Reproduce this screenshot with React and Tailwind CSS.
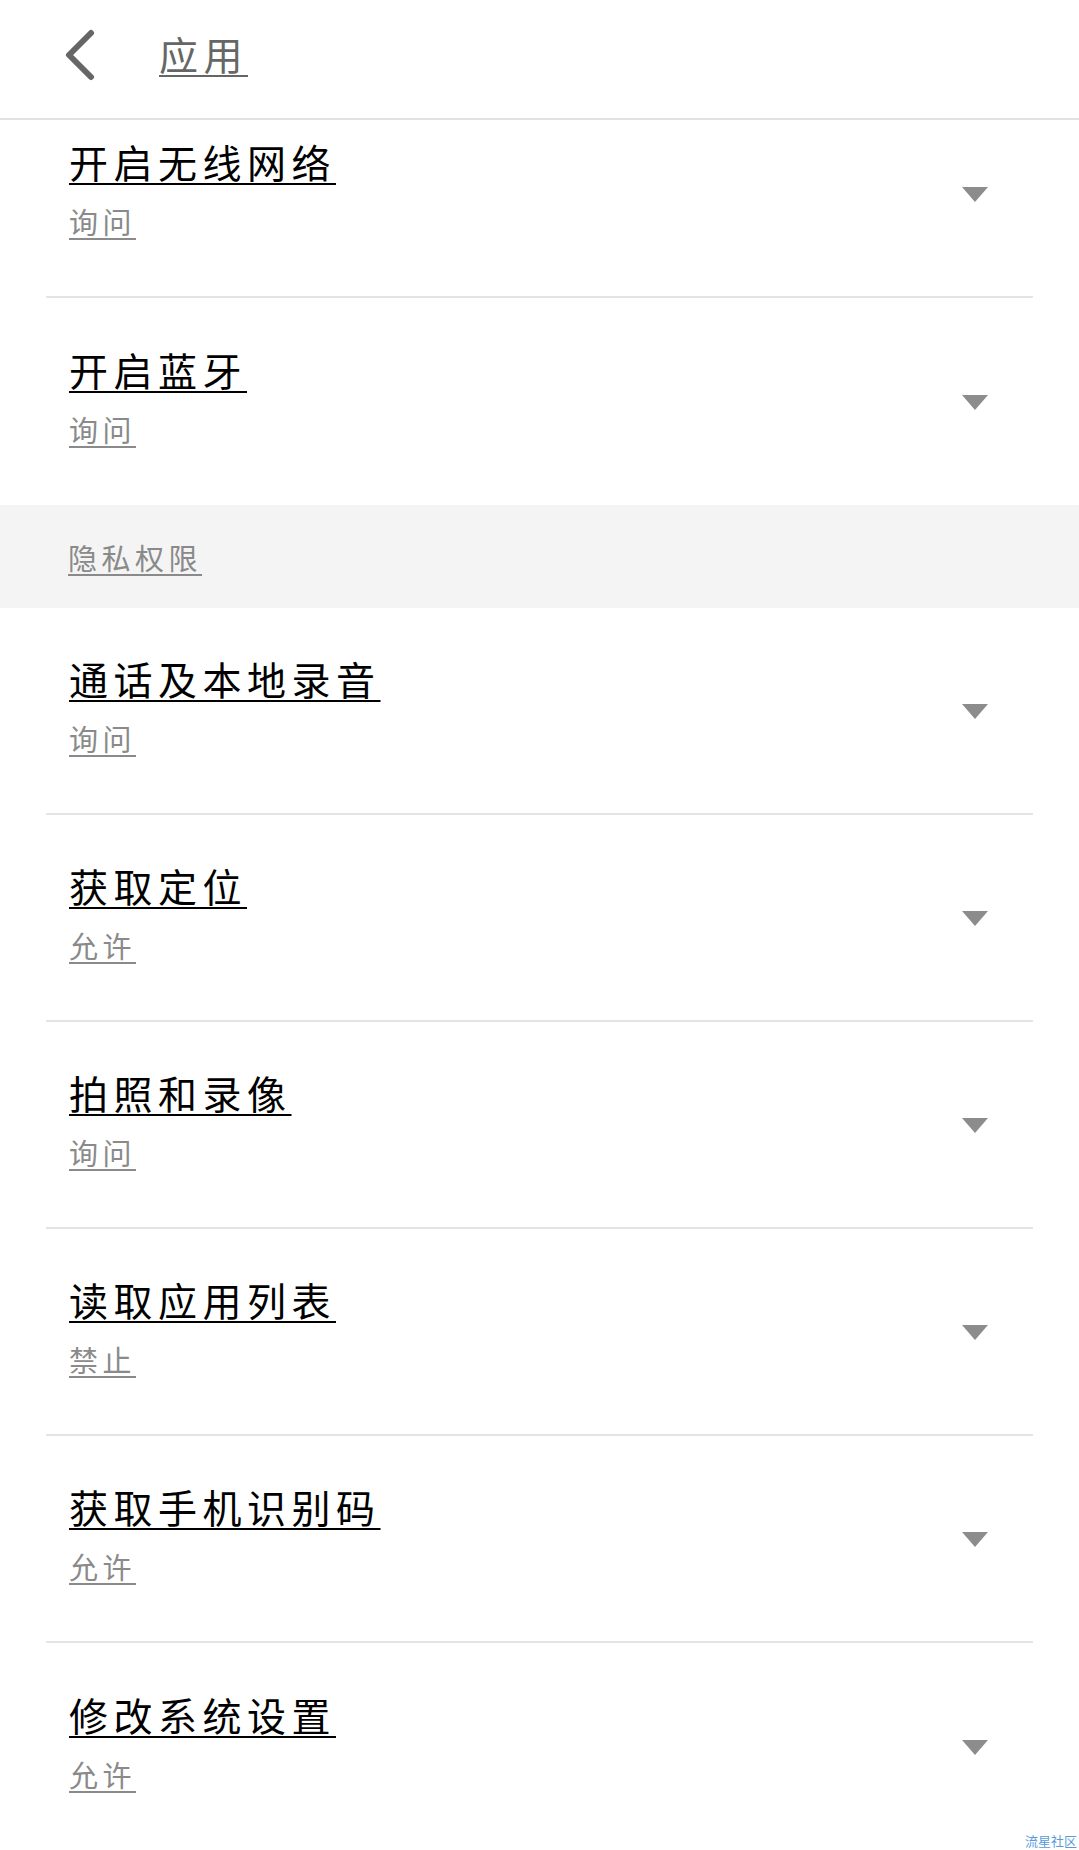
import React from 'react'

const cjk = { fontFamily: '"Noto Sans CJK SC", "Noto Sans", sans-serif' }

const before = [
  { title: '开启无线网络', value: '询问' },
  { title: '开启蓝牙', value: '询问' },
]

const privacy = [
  { title: '通话及本地录音', value: '询问' },
  { title: '获取定位', value: '允许' },
  { title: '拍照和录像', value: '询问' },
  { title: '读取应用列表', value: '禁止' },
  { title: '获取手机识别码', value: '允许' },
  { title: '修改系统设置', value: '允许' },
]

const Arrow = () => (
  <svg width="26" height="15" viewBox="0 0 26 15">
    <path d="M0 0 L26 0 L13 15 Z" fill="#8c8c8c" />
  </svg>
)

const Row = ({ title, value, last }) => (
  <div className={`mx-[46px] h-[207px] flex items-center justify-between ${last ? '' : 'border-b-2 border-[#e4e4e4]'}`}>
    <div className="pl-[23px] pb-[12px] flex flex-col">
      <span className="text-[39px] leading-[48px] tracking-[5.5px] text-black underline underline-offset-[5px] decoration-2 self-start">
        {title}
      </span>
      <span className="mt-[18px] text-[29px] leading-[36px] tracking-[4.5px] text-[#8a8a8a] underline underline-offset-[4px] decoration-2 self-start">
        {value}
      </span>
    </div>
    <div className="pr-[45px] pt-[2px]">
      <Arrow />
    </div>
  </div>
)

export default function App() {
  return (
    <div className="relative w-[1079px] h-[1850px] bg-white overflow-hidden" style={cjk}>
      <div className="h-[120px] flex items-center border-b-2 border-[#e2e2e2] bg-white relative z-10">
        <svg className="ml-[63px] -mt-[8px]" width="34" height="52" viewBox="0 0 34 52">
          <path d="M28 4 L6 26 L28 48" stroke="#666" strokeWidth="6" fill="none" strokeLinecap="round" strokeLinejoin="round" />
        </svg>
        <span className="ml-[62px] -mt-[12px] text-[39px] leading-[48px] tracking-[5.5px] text-[#666] underline underline-offset-[5px] decoration-2">
          应用
        </span>
      </div>
      <div className="-mt-[29px]">
        <Row {...before[0]} />
        <Row {...before[1]} last />
        <div className="h-[103px] bg-[#f4f4f4] flex items-center pl-[68px]">
          <span className="text-[29px] leading-[36px] tracking-[4.5px] text-[#8a8a8a] underline underline-offset-[4px] decoration-2">
            隐私权限
          </span>
        </div>
        {privacy.map((p, i) => (
          <Row key={p.title} {...p} last={i === privacy.length - 1} />
        ))}
      </div>
      <span className="absolute right-[2px] bottom-[1px] text-[13px] leading-[16px] text-[#5b9bd9]">流星社区</span>
    </div>
  )
}
